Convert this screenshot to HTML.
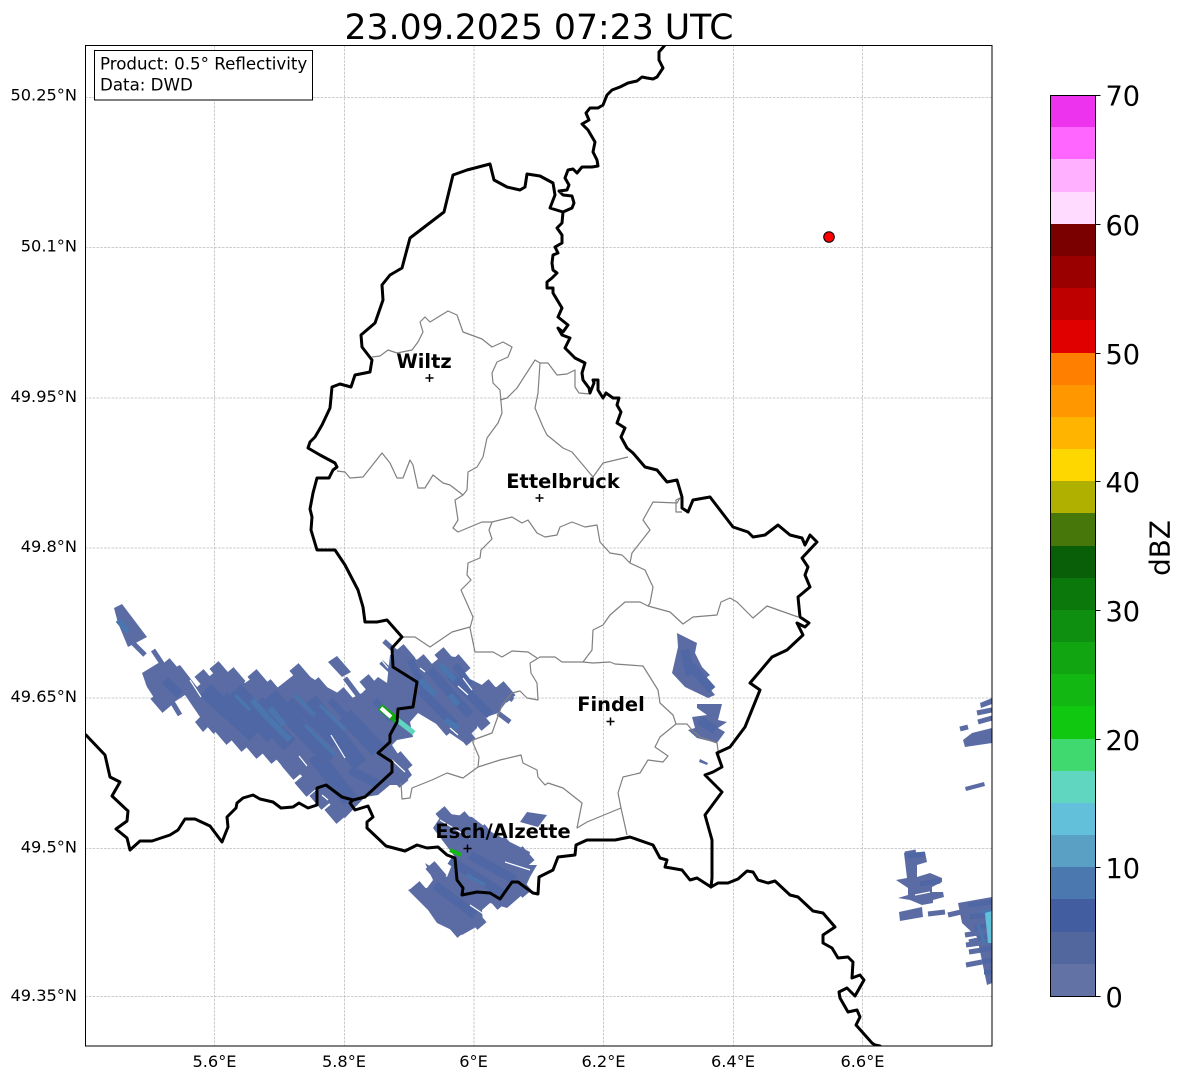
<!DOCTYPE html>
<html><head><meta charset="utf-8"><style>
html,body{margin:0;padding:0;background:#fff;width:1184px;height:1081px;overflow:hidden}
svg{display:block}
text{font-family:"DejaVu Sans","Liberation Sans",sans-serif;fill:#000}
</style></head><body>
<svg width="1184" height="1081" viewBox="0 0 1184 1081" xmlns="http://www.w3.org/2000/svg">
<defs><clipPath id="ax"><rect x="85" y="45" width="907" height="1001"/></clipPath></defs>
<rect width="1184" height="1081" fill="#fff"/>
<text x="539" y="39" font-size="34.670" text-anchor="middle">23.09.2025 07:23 UTC</text>

<g clip-path="url(#ax)">
<!-- grid -->
<g stroke="#bdbdbd" stroke-width="0.8" stroke-dasharray="2.6 1.2" fill="none">
<path d="M214.500 45V1046M344.500 45V1046M474 45V1046M603.500 45V1046M733.500 45V1046M862.500 45V1046"/>
<path d="M85 97.500H992M85 247.500H992M85 398H992M85 548H992M85 698H992M85 848.500H992M85 996.500H992"/>
</g>

<!-- rain base -->
<g fill="#5b6ca4">
<path d="M114 608L122 604L147 637L128 647L118 623Z"/>
<path d="M142 673L160 662L170 670L180 665L197 687L218 669L228 677L235 675L245 683L255 676L267 682L277 688L300 670L312 678L323 685L338 693L348 700L362 693L378 677L387 683L390 655L405 652L428 667L443 655L455 657L470 668L462 675L482 685L493 687L505 687L513 693L498 713L478 720L477 728L463 742L438 725L418 713L410 722L413 737L397 740L392 745L412 775L402 785L390 785L378 795L365 797L345 818L318 793L298 772L288 760L282 753L268 750L252 745L237 740L222 735L212 723L203 732L195 722L200 717L185 695L162 710L147 687Z"/>
<path d="M337 656L351 672L342 677L328 662Z"/>
<path d="M433 828L443 813L457 815L472 817L493 833L510 842L530 852L527 865L537 865L530 877L522 895L507 908L490 903L482 910L483 923L462 935L437 923L428 910L408 890L415 887L427 888L433 880L425 863L447 877L455 857Z"/>
<path d="M527 812L547 815L538 827L520 822Z"/>
<path d="M677 633L697 643L695 653L702 667L710 675L703 680L715 695L708 698L685 687L672 673L678 647Z"/>
<path d="M697 704L722 704L718 720L727 722L718 728L725 732L717 743L697 738L688 730L695 728L692 717L707 715L697 708Z"/>
<path d="M700 759L708 763L707 765L699 762Z"/>
<path d="M904 853L925 852L927 862L917 865L917 877L930 873L942 878L942 882L932 887L932 892L943 892L944 897L933 900L933 903L922 905L910 900L898 898L908 895L908 888L896 880L907 878Z"/>
<path d="M899 912L922 907L923 917L900 921Z"/>
<path d="M958 903L992 897V983L987 985L977 937L962 923Z"/>
<path d="M980 703L992 698V704L981 708Z"/>
<path d="M963 740L972 733L992 728V743L965 747Z"/>
<path d="M965 787L984 782L985 786L966 791Z"/>
</g>
<g stroke="#5b6ca4" fill="none" stroke-linecap="butt">
<!-- jagged cells on edges -->
<path stroke-width="12" d="M206 716L218 730M219 727L231 741M234 734L246 748M249 741L261 755M264 746L276 760M277 751L289 765M286 762L298 776M299 779L311 793M314 792L326 806M329 806L341 820M199 673L211 687M214 665L226 679M229 671L241 685M252 673L264 687M266 683L278 697M294 667L306 681M314 681L326 695M339 691L351 705M364 678L376 692M399 648L411 662M419 658L431 672M439 651L451 665M454 658L466 672M484 683L496 697M499 685L511 699M474 713L486 727M459 728L471 742M439 718L451 732M150 680L162 694M165 662L177 676M155 695L167 709M396 755L408 769M392 770L404 784M440 810L452 824M460 815L472 829M480 828L492 842M500 840L512 854M518 850L530 864M515 880L527 894M490 892L502 906M430 865L442 879M415 885L427 899M432 905L444 919M450 920L462 934M470 912L482 926"/>
<path stroke-width="5" d="M132 642L145 655M153 650L163 665M171 700L180 715M345 678L363 702M384 641L397 653M393 660L412 678M381 662L395 675M948 915L970 910M928 914L945 912M966 925L980 922M965 935L978 933M966 945L980 943M966 965L982 962M969 952L982 950M969 942L978 940M905 854L916 852M960 729L968 727M978 722L992 718M977 713L992 710M503 693L513 700M498 713L510 722"/>
</g>
<!-- darker rain texture -->
<g stroke="#4f67a4" fill="none" stroke-linecap="butt">
<path stroke-width="16" d="M205 690L255 735M235 690L290 745M270 695L330 760M310 700L360 765M345 715L378 750M315 755L350 800"/>
<path stroke-width="9" d="M165 680L180 695M350 770L380 785M430 670L470 715M450 675L490 715M420 690L455 725M450 860L505 895M470 855L515 880M435 885L475 915M685 650L690 675M700 720L715 730M690 665L712 690"/>
<path stroke-width="7" d="M225 695L270 740M260 700L320 745M290 700L335 745M330 700L372 745M375 700L392 720M410 660L425 690M455 665L470 685"/>
<path stroke-width="5" d="M968 905L992 902M970 917L992 914M975 928L992 925M978 938L992 936M980 950L992 948M982 962L992 960M984 972L992 972M905 856L925 854M920 884L940 881"/>
</g>
<g stroke="#4a75ae" fill="none" stroke-linecap="butt">
<path stroke-width="6" d="M252 700L270 720M262 712L290 740M270 708L284 725M420 680L435 695M440 665L455 680M450 695L458 705M445 720L458 728M118 620L128 632"/>
<path stroke-width="3.500" d="M295 695L315 715M320 705L345 730M235 695L250 710M305 725L335 755M467 875L485 885M980 912L992 910M978 925L985 945"/>
</g>
<path d="M985 913L992 911V943L988 943Z" fill="#62c0da"/>
<!-- white gaps -->
<g stroke="#fff" stroke-width="1.200" fill="none">
<path d="M190 680L201 697M331 735L345 758M299 756L307 766M322 795L328 800M420 668L425 672M463 678L472 690M458 686L468 695M450 728L458 735M392 760L405 772M440 820L470 838M505 862L530 870M470 905L485 915M377 655L388 668M915 895L930 892"/>
</g>
<!-- green streak -->
<path d="M380 707L398 721" stroke="#12a512" stroke-width="7" fill="none"/>
<path d="M396 719L414 733" stroke="#60d6c0" stroke-width="5" fill="none"/>
<path d="M381 708L391 717" stroke="#fff" stroke-width="4" fill="none"/>
<path d="M450 850L461 855" stroke="#12b712" stroke-width="4" fill="none"/>

<!-- admin lines -->
<g fill="none" stroke="#808080" stroke-width="1.200" stroke-linejoin="round">
<path d="M372 357L380 356L388 350L397 353L412 350L418 342L423 332L420 322L425 317L430 322L448 311L457 315L463 332L482 339L492 347L503 342L512 347L508 357L497 362L492 373L493 383L500 390L502 413L498 423L487 438L483 457L477 467L468 472L467 490L463 495"/>
<path d="M337 471L345 472L350 478L363 477L382 453L390 463L397 478L403 478L410 460L413 465L418 488L425 488L433 475L443 483L450 485L463 495L455 500L458 520L453 528L458 532L482 522L492 522L512 517L522 523L528 520L537 533L545 537L557 535L560 527L572 522L585 527L597 525L600 542L610 553L622 555L630 563L645 570L653 587L650 603L648 606"/>
<path d="M500 400L507 398L517 388L535 360L540 363L548 363L557 375L567 374L575 370L575 387L579 393L590 394"/>
<path d="M540 363L538 393L535 408L543 427L547 435L563 448L572 452L593 477L603 463L628 457"/>
<path d="M492 522L489 530L492 539L481 550L480 558L468 563L467 575L471 580L461 590L473 617L470 628L475 652L493 652L502 657L512 651L528 652L537 658"/>
<path d="M402 637L415 637L430 647L452 632L470 627"/>
<path d="M630 563L632 553L650 530L643 520L653 502L677 503L680 498L676 500L676 512L682 512"/>
<path d="M583 662L592 650L593 630L603 625L610 615L625 602L640 602L648 606L670 612L683 624L693 617L717 615L721 602L730 598L737 602L753 618L767 606L798 617"/>
<path d="M530 663L540 657L555 657L562 662L583 662L593 663L610 662L615 664L643 666L658 690L660 703L673 715L676 724L660 737L655 747L668 756L663 762L648 760L640 773L623 777L618 793L621 808L627 835"/>
<path d="M621 808L587 822L577 828L582 803L563 788L548 783L545 785L538 777L537 770L523 763L521 755L500 760L478 767L463 778L447 773L432 780L412 788L410 798L402 799L401 783"/>
<path d="M478 767L479 757L473 743L473 740L492 733L502 705L512 693L520 691L527 698L538 700L537 683L531 673L530 663"/>
<path d="M676 724L687 724L692 730L700 737L717 743L719 757"/>
</g>

<!-- borders -->
<g fill="none" stroke="#000" stroke-width="3" stroke-linejoin="round" stroke-linecap="round">
<path d="M665 45L659 52L659 60L663 68L657 77L653 79L647 78L642 77L637 81L628 83L620 87L612 90L607 95L603 105L598 108L590 108L586 113L589 120L582 124L588 130L595 142L593 152L597 160L598 166L592 167L582 167L577 173L573 169L568 170L565 178L569 185L567 190L559 191L563 195L572 196L574 203L572 208L563 212L550 208L555 195L553 183L540 176L527 174L525 187L520 190L507 187L494 180L490 164L467 170L453 175L444 212L410 238L402 268L390 275L382 285L383 300L375 323L361 335L362 347L372 360L370 372L355 375L351 387L340 384L332 387L330 408L322 425L315 437L310 442L308 448L320 455L335 463L337 467L333 470L329 478L317 478L313 493L310 509L312 517L311 530L317 550L335 550L345 565L358 590L363 607L365 622L377 622L387 620L402 637L392 648L393 667L417 682L413 707L398 709L397 722L390 735L390 742L378 753L392 762L392 772L365 797L353 800L342 797L326 785L317 788L317 805L308 808L299 803L293 807L281 808L273 802L260 799L253 795L243 798L237 803L236 808L227 817L228 827L222 842L210 826L195 819L185 819L178 830L170 835L152 841L140 841L130 850L127 838L116 829L127 821L128 811L112 796L120 782L110 777L105 755L86 735"/>
<path d="M353 800L350 803L355 810L368 806L373 817L367 822L367 828L386 846L405 851L417 845L427 848L438 847L447 855L455 858L457 880L463 888L462 895L477 892L490 893L500 899L512 882L518 882L533 893L538 894L539 877L553 870L558 857L575 855L576 845L587 840L615 840L630 837L653 845L660 858L667 860L665 867L682 870L690 880L697 878L711 887L712 878L712 840L705 815L722 792L705 775L713 772L722 767L717 753L730 747L745 727L760 690L750 683L772 657L787 650L803 635L797 623L805 627L809 623L800 617L798 597L810 587L805 575L808 567L802 558L817 542L810 535L805 545L802 538L790 535L778 525L765 535L753 537L748 532L733 527L710 497L693 500L688 512L682 508L682 497L677 480L667 482L657 470L645 467L633 453L627 448L621 437L625 428L617 423L621 412L617 405L619 398L613 398L606 393L603 398L598 390L598 380L593 380L594 383L590 393L589 388L583 380L582 373L585 363L575 358L570 353L565 348L570 338L562 335L558 328L563 332L568 325L558 317L562 308L553 293L553 288L547 288L547 282L552 278L557 273L553 270L552 263L553 255L558 253L555 247L562 243L562 235L557 228L562 223L563 212"/>
<path d="M711 887L718 883L728 883L738 879L747 871L753 872L758 880L768 883L775 881L790 895L798 897L813 911L823 913L835 927L823 935L823 943L832 948L838 958L848 957L853 962L852 978L860 975L864 980L855 996L847 988L839 992L840 998L848 1012L857 1010L860 1017L856 1025L872 1043L875 1045L880 1046"/>
</g>

<!-- markers -->
<g stroke="#000" stroke-width="1.500" fill="none">
<path d="M425.500 378H433.500M429.500 374V382"/>
<path d="M535.500 498H543.500M539.500 494V502"/>
<path d="M606.500 721.500H614.500M610.500 717.500V725.500"/>
<path d="M463.500 848.500H471.500M467.500 844.500V852.500"/>
</g>
<circle cx="829" cy="237" r="5.300" fill="#f00" stroke="#000" stroke-width="1"/>

<g font-size="19.440" font-weight="bold" text-anchor="middle">
<text x="424" y="368">Wiltz</text>
<text x="563" y="488">Ettelbruck</text>
<text x="611" y="711">Findel</text>
<text x="503" y="838">Esch/Alzette</text>
</g>

<!-- info box -->
<rect x="94.500" y="50.500" width="218" height="49.500" fill="#fff" stroke="#000" stroke-width="1"/>
<text x="100" y="69.500" font-size="16.670">Product: 0.5° Reflectivity</text>
<text x="100" y="90.500" font-size="16.670">Data: DWD</text>
</g>

<rect x="85.500" y="45.500" width="906.500" height="1000.500" fill="none" stroke="#000" stroke-width="1"/>

<!-- axis labels -->
<g font-size="16.200" text-anchor="end">
<text x="77" y="100.500">50.25°N</text>
<text x="77" y="251.500">50.1°N</text>
<text x="77" y="402">49.95°N</text>
<text x="77" y="552">49.8°N</text>
<text x="77" y="702">49.65°N</text>
<text x="77" y="852.500">49.5°N</text>
<text x="77" y="1001">49.35°N</text>
</g>
<g font-size="16.200" text-anchor="middle">
<text x="214.500" y="1067">5.6°E</text>
<text x="344" y="1067">5.8°E</text>
<text x="473.500" y="1067">6°E</text>
<text x="603.500" y="1067">6.2°E</text>
<text x="733" y="1067">6.4°E</text>
<text x="862.500" y="1067">6.6°E</text>
</g>

<!-- colorbar -->
<g shape-rendering="crispEdges">
<rect x="1050" y="95" width="46" height="32.300" fill="#ee33ee"/>
<rect x="1050" y="127" width="46" height="32.300" fill="#ff66ff"/>
<rect x="1050" y="159" width="46" height="33.300" fill="#ffb0ff"/>
<rect x="1050" y="192" width="46" height="32.300" fill="#ffdcff"/>
<rect x="1050" y="224" width="46" height="32.300" fill="#7a0000"/>
<rect x="1050" y="256" width="46" height="32.300" fill="#9b0000"/>
<rect x="1050" y="288" width="46" height="32.300" fill="#bf0000"/>
<rect x="1050" y="320" width="46" height="33.300" fill="#e00000"/>
<rect x="1050" y="353" width="46" height="32.300" fill="#ff7f00"/>
<rect x="1050" y="385" width="46" height="32.300" fill="#ff9800"/>
<rect x="1050" y="417" width="46" height="32.300" fill="#ffb400"/>
<rect x="1050" y="449" width="46" height="32.300" fill="#ffd700"/>
<rect x="1050" y="481" width="46" height="32.300" fill="#b0b000"/>
<rect x="1050" y="513" width="46" height="33.300" fill="#47770a"/>
<rect x="1050" y="546" width="46" height="32.300" fill="#085f08"/>
<rect x="1050" y="578" width="46" height="32.300" fill="#0b780b"/>
<rect x="1050" y="610" width="46" height="32.300" fill="#0f8f0f"/>
<rect x="1050" y="642" width="46" height="32.300" fill="#12a512"/>
<rect x="1050" y="674" width="46" height="32.300" fill="#12b712"/>
<rect x="1050" y="706" width="46" height="33.300" fill="#10c810"/>
<rect x="1050" y="739" width="46" height="32.300" fill="#3fd96f"/>
<rect x="1050" y="771" width="46" height="32.300" fill="#60d6c0"/>
<rect x="1050" y="803" width="46" height="32.300" fill="#62c0da"/>
<rect x="1050" y="835" width="46" height="32.300" fill="#5a9fc4"/>
<rect x="1050" y="867" width="46" height="32.300" fill="#4b78ae"/>
<rect x="1050" y="899" width="46" height="33.300" fill="#435ea0"/>
<rect x="1050" y="932" width="46" height="32.300" fill="#53679f"/>
<rect x="1050" y="964" width="46" height="32.300" fill="#6272a4"/>
</g>
<rect x="1050.500" y="95.500" width="45" height="901" fill="none" stroke="#000" stroke-width="1"/>
<path d="M1095.500 95.500H1100.500M1095.500 224.500H1100.500M1095.500 353.500H1100.500M1095.500 481.500H1100.500M1095.500 610.500H1100.500M1095.500 739.500H1100.500M1095.500 867.500H1100.500M1095.500 996.500H1100.500" stroke="#000" stroke-width="1" fill="none"/>
<g font-size="27.200">
<text x="1105.500" y="105.500">70</text>
<text x="1105.500" y="235">60</text>
<text x="1105.500" y="364">50</text>
<text x="1105.500" y="492">40</text>
<text x="1105.500" y="621">30</text>
<text x="1105.500" y="750">20</text>
<text x="1105.500" y="878">10</text>
<text x="1105.500" y="1007">0</text>
</g>
<text transform="translate(1169.500 548) rotate(-90)" font-size="27.780" text-anchor="middle">dBZ</text>
</svg>
</body></html>
